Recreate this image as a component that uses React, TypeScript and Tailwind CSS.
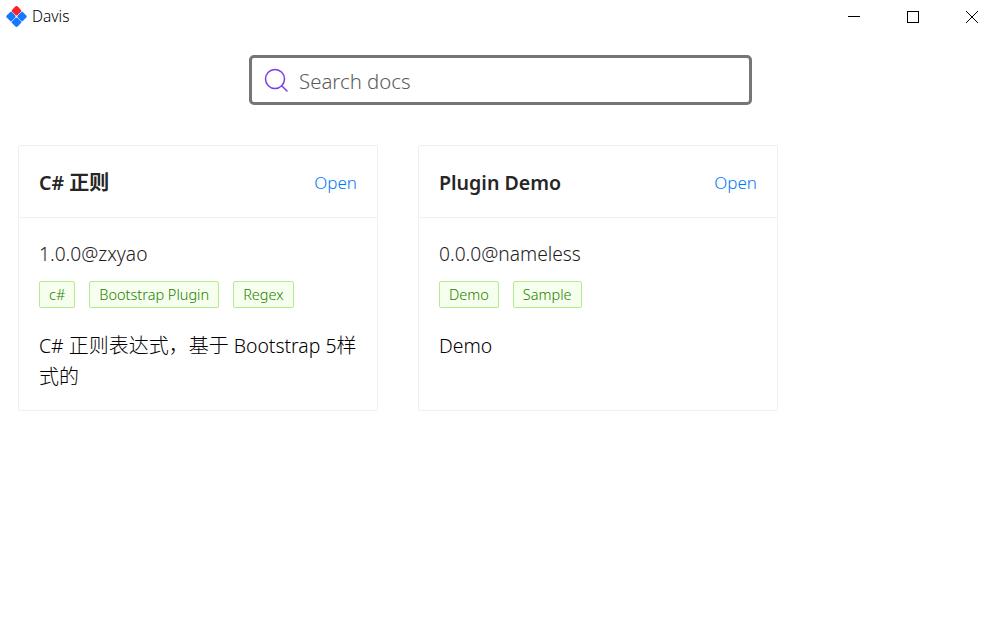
const font = { fontFamily: '"Noto Sans", "Noto Sans CJK SC", sans-serif' };

function Logo() {
  return (
    <svg width="21" height="21" viewBox="0 0 21 21" className="shrink-0">
      <path d="M10.5 0 Q11.2 0 11.8 0.6 L15 3.9 Q15.7 4.7 15 5.5 L11.6 9 Q10.5 10 9.4 9 L6 5.5 Q5.3 4.7 6 3.9 L9.2 0.6 Q9.8 0 10.5 0 Z" fill="#f5222d" />
      <path d="M4.2 5.9 Q5 5.3 5.8 5.9 L9.2 9.4 Q10 10.5 9.2 11.6 L5.8 15.1 Q5 15.7 4.2 15.1 L0.7 11.6 Q-0.2 10.5 0.7 9.4 Z" fill="#1677ff" />
      <path d="M15.2 5.9 Q16 5.3 16.8 5.9 L20.3 9.4 Q21.2 10.5 20.3 11.6 L16.8 15.1 Q16 15.7 15.2 15.1 L11.8 11.6 Q11 10.5 11.8 9.4 Z" fill="#1677ff" />
      <path d="M9.4 12 Q10.5 11 11.6 12 L15 15.5 Q15.7 16.3 15 17.1 L11.6 20.5 Q10.5 21.3 9.4 20.5 L6 17.1 Q5.3 16.3 6 15.5 Z" fill="#1677ff" />
    </svg>
  );
}

function Tag({ children }: { children: string }) {
  return (
    <span className="inline-flex h-[27px] items-center rounded-[2px] border border-[#b7eb8f] bg-[#f6ffed] px-[9px] text-[14.5px] font-light text-[#248000]">
      {children}
    </span>
  );
}

function Card({ title, meta, tags, desc }: { title: React.ReactNode; meta: string; tags: string[]; desc: React.ReactNode }) {
  return (
    <div className="flex h-[266px] w-[360px] flex-col rounded-[2px] border border-[#f0f0f0] bg-white">
      <div className="flex h-[72px] items-center justify-between border-b border-[#f0f0f0] pl-5 pr-5">
        <span className="translate-y-[1px] text-[19.6px] font-semibold text-[#262626]">{title}</span>
        <span className="translate-y-[1px] text-[17px] font-light text-[#0078f5]">Open</span>
      </div>
      <div className="flex flex-col px-5 pt-[23px]">
        <div className="h-[26px] text-[19.2px] font-light leading-[26px] text-[#1c1c1c]">{meta}</div>
        <div className="mt-[14px] flex gap-[14px]">
          {tags.map((t) => (
            <Tag key={t}>{t}</Tag>
          ))}
        </div>
        <div className="mt-[22px] text-[19.4px] font-light leading-[31px] text-black">{desc}</div>
      </div>
    </div>
  );
}

const Cjk = ({ children }: { children: string }) => <span className="text-[20px]">{children}</span>;

export default function App() {
  return (
    <div className="h-[626px] w-[1000px] overflow-hidden bg-white" style={font}>
      <div className="flex h-[33px] items-center justify-between">
        <div className="flex items-center gap-[5px] pl-[6px]">
          <Logo />
          <span className="text-[15.5px] font-light text-black">Davis</span>
        </div>
        <div className="flex items-center">
          <div className="flex h-[33px] w-[58px] items-center justify-center">
            <svg width="12" height="12" viewBox="0 0 12 12"><path d="M0 5.5H12" stroke="#000" strokeWidth="1" /></svg>
          </div>
          <div className="flex h-[33px] w-[60px] items-center justify-center">
            <svg width="12" height="12" viewBox="0 0 12 12"><rect x="0.5" y="0.5" width="11" height="11" fill="none" stroke="#000" strokeWidth="1" /></svg>
          </div>
          <div className="flex h-[33px] w-[57px] items-center justify-center">
            <svg width="12" height="12" viewBox="0 0 12 12"><path d="M0 0L12 12M12 0L0 12" stroke="#000" strokeWidth="1" /></svg>
          </div>
        </div>
      </div>
      <div className="mt-[22px] flex justify-start pl-[249px]">
        <div className="flex h-[50px] w-[503px] items-center gap-[10px] rounded-[5px] border-[3px] border-[#767676] bg-white pl-[11px]">
          <svg width="26" height="26" viewBox="0 0 26 26" fill="none" stroke="#7c3aed" strokeWidth="1.5">
            <circle cx="12" cy="12" r="9.5" />
            <path d="M19 19L24 24" strokeLinecap="round" />
          </svg>
          <span className="translate-y-[1px] text-[20.4px] font-light text-[#5c5c5c]">Search docs</span>
        </div>
      </div>
      <div className="mt-[40px] flex gap-[40px] pl-[18px]">
        <Card
          title={<>C# <span className="text-[20px]">正则</span></>}
          meta="1.0.0@zxyao"
          tags={["c#", "Bootstrap Plugin", "Regex"]}
          desc={<>C# <Cjk>正则表达式，基于</Cjk> <span>Bootstrap 5</span><Cjk>样</Cjk><Cjk>式的</Cjk></>}
        />
        <Card title="Plugin Demo" meta="0.0.0@nameless" tags={["Demo", "Sample"]} desc="Demo" />
      </div>
    </div>
  );
}
